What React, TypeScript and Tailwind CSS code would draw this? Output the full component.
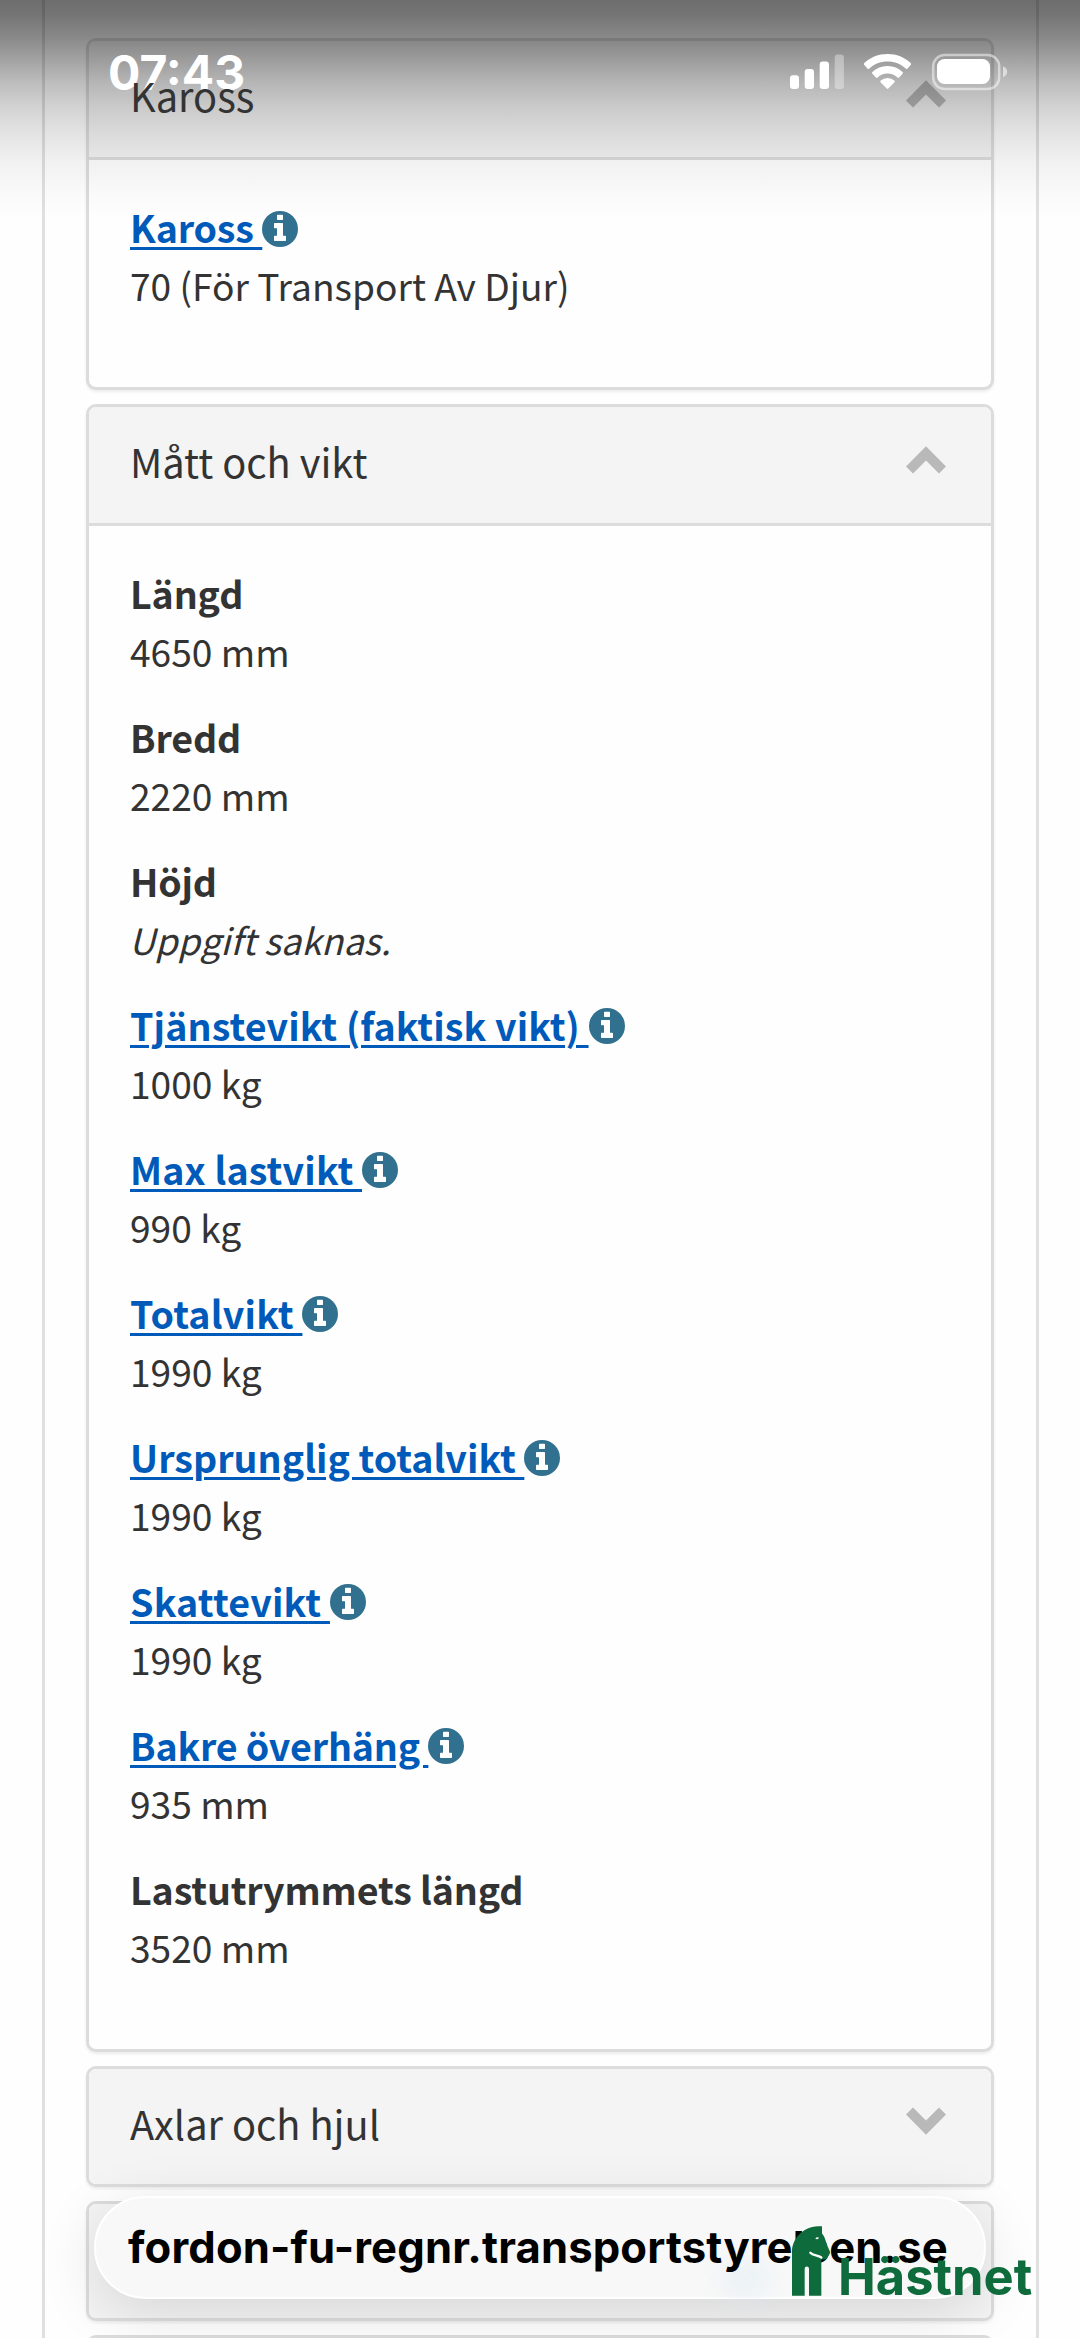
import type { ReactNode } from "react";

type Entry = { label: string; value: string; link?: boolean; missing?: boolean; tracking?: string };

const bodyEntries: Entry[] = [
  { label: "Kaross", value: "70 (För Transport Av Djur)", link: true, tracking: "tracking-[-0.1px]" },
];

const sizeEntries: Entry[] = [
  { label: "Längd", value: "4650 mm", tracking: "tracking-[-0.15px]" },
  { label: "Bredd", value: "2220 mm", tracking: "tracking-[-0.15px]" },
  { label: "Höjd", value: "Uppgift saknas.", missing: true, tracking: "tracking-[-0.2px]" },
  { label: "Tjänstevikt (faktisk vikt)", value: "1000 kg", link: true, tracking: "tracking-[0.11px]" },
  { label: "Max lastvikt", value: "990 kg", link: true, tracking: "tracking-[0.13px]" },
  { label: "Totalvikt", value: "1990 kg", link: true, tracking: "tracking-[0.18px]" },
  { label: "Ursprunglig totalvikt", value: "1990 kg", link: true, tracking: "tracking-[0.04px]" },
  { label: "Skattevikt", value: "1990 kg", link: true, tracking: "tracking-[0.2px]" },
  { label: "Bakre överhäng", value: "935 mm", link: true, tracking: "tracking-[-0.17px]" },
  { label: "Lastutrymmets längd", value: "3520 mm", tracking: "tracking-[-0.15px]" },
];

function InfoIcon() {
  return (
    <svg viewBox="128 128 1536 1536" className="mt-[3px] size-9 shrink-0">
      <circle cx="896" cy="896" r="768" fill="#31708f" />
      <path
        fill="#fff"
        d="M1152 1376v-160q0-14-9-23t-23-9h-96v-512q0-14-9-23t-23-9h-320q-14 0-23 9t-9 23v160q0 14 9 23t23 9h96v320h-96q-14 0-23 9t-9 23v160q0 14 9 23t23 9h448q14 0 23-9t9-23zM1024 480v-160q0-14-9-23t-23-9h-192q-14 0-23 9t-9 23v160q0 14 9 23t23 9h192q14 0 23-9t9-23z"
      />
    </svg>
  );
}

function Chevron({ open }: { open?: boolean }) {
  return (
    <svg
      viewBox="0 0 40 28"
      className={open ? "mt-[39px] h-7 w-10 shrink-0" : "mt-[38px] h-7 w-10 shrink-0 rotate-180"}
      fill="#b9b9b9"
    >
      <path d="M20 0.3 40 20.4 33 27.4 20 14.5 7 27.4 0 20.4Z" />
    </svg>
  );
}

function Panel({ title, open, className, children }: { title: string; open?: boolean; className: string; children?: ReactNode }) {
  return (
    <section
      className={`flex shrink-0 flex-col rounded-[10px] border-[3px] border-[#dcdcdc] bg-[#fefefe] shadow-[0_2px_3px_rgba(0,0,0,0.07)] ${className}`}
    >
      <header
        className={`flex shrink-0 items-start justify-between bg-[#f4f4f4] pr-[45px] pl-[41px] ${
          open ? "h-[119px] rounded-t-[7px] border-b-[3px] border-[#dcdcdc]" : "h-full rounded-[7px]"
        }`}
      >
        <h2 className="relative z-30 mt-[25px] text-[39.8px] leading-[58px] text-[#333]">{title}</h2>
        <Chevron open={open} />
      </header>
      {children}
    </section>
  );
}

function EntryList({ entries }: { entries: Entry[] }) {
  return (
    <dl className="flex flex-col gap-7 pt-[38px] pl-[41px] text-[37.15px] leading-[58px] text-[#333]">
      {entries.map((e) => (
        <div key={e.label} className="flex h-[116px] flex-col">
          <dt className={`flex h-[58px] items-center text-[37.6px] font-bold ${e.tracking ?? ""}`}>
            {e.link ? (
              <>
                <a className="whitespace-pre text-[#005ab9] underline decoration-[2.7px] underline-offset-[4px]">
                  {e.label + " "}
                </a>
                <InfoIcon />
              </>
            ) : (
              e.label
            )}
          </dt>
          <dd className={e.missing ? "-ml-px h-[58px] text-[36.2px] italic" : "h-[58px]"}>{e.value}</dd>
        </div>
      ))}
    </dl>
  );
}

function StatusBar() {
  return (
    <div className="absolute inset-x-0 top-0 z-20 flex h-[110px] items-start justify-between pr-[72px] pl-[108px]">
      <span className="mt-[43.500px] font-['Inter',sans-serif] text-[48px] leading-[58px] font-bold text-white">
        07:43
      </span>
      <svg viewBox="0 0 220 40" className="mt-[52px] h-10 w-[220px]" fill="#fff">
        <rect x="2" y="23.3" width="9" height="13.6" rx="3" />
        <rect x="16.7" y="17" width="9.3" height="20" rx="3" />
        <rect x="31.7" y="9.6" width="9.3" height="27.3" rx="3" />
        <rect x="46.7" y="2.6" width="9.2" height="34.3" rx="3" opacity="0.35" />
        <path d="M76.3 12.9a1.2 1.2 0 0 1 0-1.8C82.3 5.3 90.6 2 99.5 2s17.2 3.3 23.2 9.1a1.2 1.2 0 0 1 0 1.8l-3.1 3.6a1.3 1.3 0 0 1-1.9 0C112.9 12 106.5 9.5 99.5 9.5S86.1 12 81.3 16.5a1.3 1.3 0 0 1-1.9 0Z" />
        <path d="M84.4 21.7a1.2 1.2 0 0 1 0-1.7c4-3.7 9.3-6 15.1-6s11.1 2.300 15.1 6a1.2 1.2 0 0 1 0 1.7l-3.5 3.800a1.200 1.200 0 0 1-1.700 0c-2.600-2.400-6.100-3.900-9.900-3.900s-7.300 1.500-9.900 3.900a1.200 1.200 0 0 1-1.700 0Z" />
        <path d="M92.700 30.400a1.200 1.200 0 0 1 0-1.800 10.100 10.100 0 0 1 13.600 0 1.200 1.200 0 0 1 0 1.800l-6 6.200a1.200 1.200 0 0 1-1.600 0Z" />
        <rect x="145.2" y="2.9" width="66" height="34.2" rx="11.5" fill="none" stroke="#fff" strokeOpacity="0.5" strokeWidth="2.5" />
        <rect x="149" y="7" width="53" height="25" rx="7.5" />
        <path d="M215 14.2c2.600 1 4.200 3.200 4.200 5.500s-1.600 4.500-4.200 5.500Z" opacity="0.55" />
      </svg>
    </div>
  );
}

function Watermark() {
  return (
    <div className="absolute top-[2226px] left-[792px] z-50 flex h-[70px] items-end text-[#0d6b3c]">
      <svg viewBox="0 0 114 209" className="h-[70px] w-[38px] shrink-0" fill="#0d6b3c">
        <path d="M0 209V76C0 40 30 2 78 0H90V22C97 29 99 38 103 50C106 60 111 69 114 77C115 84 109 89 105 97C100 102 93 99 88 101V209H51V128A6.5 7 0 0 0 38 128V209Z" />
        <path d="M55 80C63 89 77 86 88 94" fill="none" stroke="#fff" strokeWidth="7" strokeLinecap="round" />
        <path d="M70 37c4-5 8-4 11-2-2 5-8 6-11 2Z" fill="#fff" />
      </svg>
      <span className="-mb-[12px] ml-[8px] font-['Inter',sans-serif] text-[50.6px] leading-[62px] font-bold">Hästnet</span>
    </div>
  );
}

export default function App() {
  return (
    <div className="relative h-[2338px] w-[1080px] overflow-hidden bg-[#fefefe] font-['Noto_Sans_CJK_SC','Noto_Sans',sans-serif]">
      <main className="mx-auto flex h-full w-[997px] flex-col border-x-[3px] border-[#e0e0e0] px-[41.5px] pt-[38px]">
        <Panel title="Kaross" open className="mb-[13.5px] h-[352px]">
          <EntryList entries={bodyEntries} />
        </Panel>
        <Panel title="Mått och vikt" open className="mb-[14px] h-[1648px]">
          <EntryList entries={sizeEntries} />
        </Panel>
        <Panel title="Axlar och hjul" className="mb-[14px] h-[121px]" />
        <Panel title="" className="mb-[14px] h-[120px]" />
        <Panel title="" className="h-[121px]" />
      </main>

      <div className="pointer-events-none absolute inset-x-0 top-0 z-10 h-[220px] bg-[linear-gradient(to_bottom,rgba(0,0,0,0.57)_0px,rgba(0,0,0,0.54)_15px,rgba(0,0,0,0.46)_38px,rgba(0,0,0,0.37)_58px,rgba(0,0,0,0.26)_82px,rgba(0,0,0,0.17)_108px,rgba(0,0,0,0.1)_135px,rgba(0,0,0,0.05)_162px,rgba(0,0,0,0.015)_195px,rgba(0,0,0,0)_220px)]" />
      <StatusBar />

      <div className="absolute top-[2196px] left-[94px] z-40 flex h-[103px] w-[892px] items-center justify-center rounded-full border-2 border-white bg-[#f8f8f8] shadow-[0_14px_60px_rgba(0,0,0,0.12)]">
        <div className="absolute right-[215px] bottom-0 h-9 w-12 rounded-full bg-[#dcebf5]/50 blur-md" />
        <span className="relative mr-[4px] -mb-px font-['Inter',sans-serif] text-[43.6px] leading-[52px] font-bold tracking-[0.14px] text-black">
          fordon-fu-regnr.transportstyrelsen.se
        </span>
      </div>
      <Watermark />
    </div>
  );
}
